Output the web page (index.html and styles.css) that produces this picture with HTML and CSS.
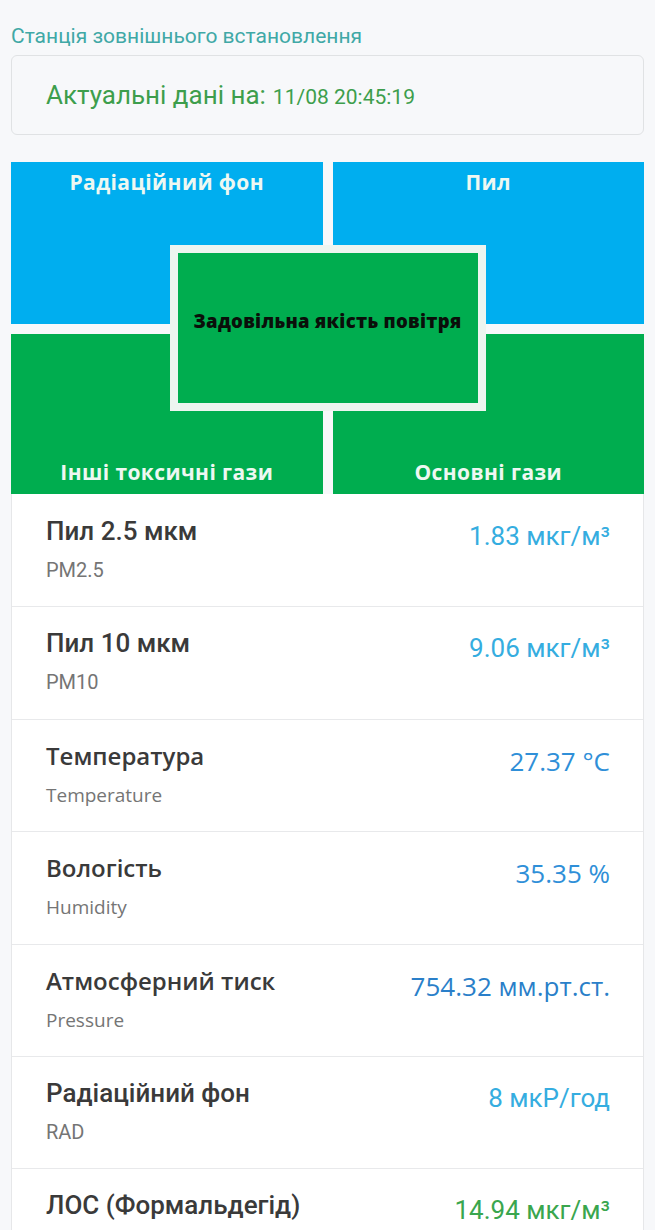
FILE: index.html
```html
<!DOCTYPE html>
<html lang="uk">
<head>
    <meta charset="UTF-8">
    <meta name="viewport" content="width=device-width, initial-scale=1.0">
    <title>Станція зовнішнього встановлення</title>
    <link rel="stylesheet" href="styles.css">
</head>
<body>
    <div class="container">
        <h4 class="station-title">Станція зовнішнього встановлення</h4>

        <div class="updated-card">
            <span class="updated-label">Актуальні дані на:</span>
            <span class="updated-date">11/08 20:45:19</span>
        </div>

        <!-- плитки якості -->
        <div class="quality-grid">
            <div class="tile tile-blue tile-top">Радіаційний фон</div>
            <div class="tile tile-blue tile-top">Пил</div>
            <div class="tile tile-green tile-bottom">Інші токсичні гази</div>
            <div class="tile tile-green tile-bottom">Основні гази</div>
            <div class="quality-center">
                <span>Задовільна якість повітря</span>
            </div>
        </div>

        <!-- показники -->
        <div class="sensor-list">
            <div class="sensor-row">
                <div class="sensor-info">
                    <div class="sensor-name">Пил 2.5 мкм</div>
                    <div class="sensor-code">PM2.5</div>
                </div>
                <div class="sensor-value value-light">1.83 мкг/м³</div>
            </div>
            <div class="sensor-row">
                <div class="sensor-info">
                    <div class="sensor-name">Пил 10 мкм</div>
                    <div class="sensor-code">PM10</div>
                </div>
                <div class="sensor-value value-light">9.06 мкг/м³</div>
            </div>
            <div class="sensor-row row-sans">
                <div class="sensor-info">
                    <div class="sensor-name">Температура</div>
                    <div class="sensor-code">Temperature</div>
                </div>
                <div class="sensor-value value-blue">27.37 °C</div>
            </div>
            <div class="sensor-row row-sans">
                <div class="sensor-info">
                    <div class="sensor-name">Вологість</div>
                    <div class="sensor-code">Humidity</div>
                </div>
                <div class="sensor-value value-blue">35.35 %</div>
            </div>
            <div class="sensor-row row-sans">
                <div class="sensor-info">
                    <div class="sensor-name">Атмосферний тиск</div>
                    <div class="sensor-code">Pressure</div>
                </div>
                <div class="sensor-value value-dark">754.32 мм.рт.ст.</div>
            </div>
            <div class="sensor-row">
                <div class="sensor-info">
                    <div class="sensor-name">Радіаційний фон</div>
                    <div class="sensor-code">RAD</div>
                </div>
                <div class="sensor-value value-light">8 мкР/год</div>
            </div>
            <div class="sensor-row">
                <div class="sensor-info">
                    <div class="sensor-name">ЛОС (Формальдегід)</div>
                </div>
                <div class="sensor-value value-green">14.94 мкг/м³</div>
            </div>
        </div>
    </div>
</body>
</html>
```

FILE: styles.css
```css
body {
    font-family: Roboto, "Liberation Sans", sans-serif;
    background-color: #f7f8fa;
    margin: 0;
}

.container {
    padding: 0 11px;
}

.station-title {
    margin: 0;
    padding-top: 23px;
    font-size: 21px;
    font-weight: 400;
    line-height: 26px;
    color: #40a8a6;
}

.updated-card {
    margin-top: 6px;
    height: 78px;
    padding-left: 34px;
    display: flex;
    align-items: center;
    border: 1px solid #e0e2e4;
    border-radius: 6px;
    color: #3d9e4c;
    gap: 7px;
}

.updated-label {
    font-size: 26px;
}

.updated-date {
    font-size: 21px;
    padding-top: 3px;
}

.quality-grid {
    position: relative;
    margin-top: 27px;
    display: grid;
    grid-template-columns: 1fr 1fr;
    grid-template-rows: 162px 160px;
    gap: 10px;
}

.tile {
    display: flex;
    justify-content: center;
    font-family: "Open Sans", sans-serif;
    font-weight: 700;
    font-size: 21px;
    line-height: 30px;
    letter-spacing: 0.4px;
    color: #eef8f2;
}

.tile-top {
    align-items: flex-start;
    padding-top: 5px;
}

.tile-bottom {
    align-items: flex-end;
    padding-bottom: 7px;
}

.tile-blue {
    background-color: #00aeef;
}

.tile-green {
    background-color: #00ad4f;
}

.quality-center {
    position: absolute;
    left: 50%;
    top: 50%;
    transform: translate(-50%, -50%);
    width: 300px;
    height: 150px;
    border: 8px solid #edf5f0;
    background-color: #00ad4f;
    display: flex;
    align-items: center;
    justify-content: center;
    font-family: "Open Sans", sans-serif;
    font-weight: 800;
    font-size: 18.5px;
    letter-spacing: 0.3px;
    color: #0a0f0a;
}

.quality-center span {
    margin-bottom: 16px;
}

.sensor-list {
    padding-top: 1px;
    background-color: #fff;
    border-left: 1px solid #e6e7e9;
    border-right: 1px solid #e6e7e9;
}

.sensor-row {
    display: flex;
    justify-content: space-between;
    align-items: flex-start;
    height: 112.4px;
    padding: 21px 33px 0 34px;
    box-sizing: border-box;
    border-bottom: 1px solid #e8e9eb;
}

.sensor-name {
    font-size: 26px;
    font-weight: 500;
    line-height: 30px;
    color: #3a3a3a;
}

.sensor-code {
    margin-top: 11px;
    font-size: 20px;
    line-height: 26px;
    color: #757575;
}

.sensor-value {
    padding-top: 5px;
    font-size: 26px;
    line-height: 30px;
}

.row-sans .sensor-name {
    font-family: "Open Sans", sans-serif;
    font-weight: 600;
    font-size: 24px;
}

.row-sans .sensor-code {
    font-family: "Open Sans", sans-serif;
    font-size: 19px;
}

.row-sans .sensor-value {
    font-family: "Open Sans", sans-serif;
    font-size: 26px;
}

.value-light {
    color: #35ade0;
}

.value-blue {
    color: #2f8fd8;
}

.value-dark {
    color: #2a7fc9;
}

.value-green {
    color: #3aa64e;
}
```
